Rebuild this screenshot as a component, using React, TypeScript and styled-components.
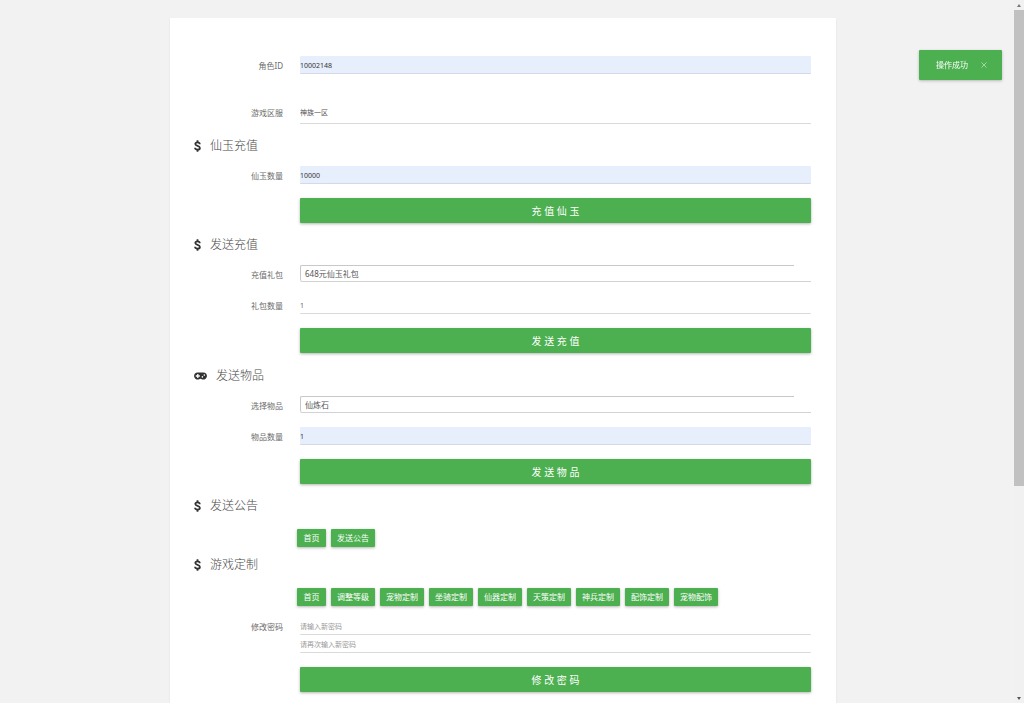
import React from "react";
import styled, { createGlobalStyle } from "styled-components";

const GlobalStyle = createGlobalStyle`
  * { box-sizing: border-box; }
  body {
    margin: 0;
    background: #f2f2f2;
    color: #5e5e5e;
    font-family: "Noto Sans", "Noto Sans CJK SC", sans-serif;
    font-size: 8px;
    line-height: 12px;
  }
  button, input, select { font: inherit; margin: 0; }
`;

const Page = styled.div`
  display: grid;
  grid-template-columns: minmax(0, 1fr) 10px;
  height: 100vh;
  overflow: hidden;
`;

const Content = styled.main`
  padding: 18px 8px 0 0;
  overflow: hidden;
`;

const Card = styled.form`
  width: 100%;
  max-width: 666px;
  min-height: 100vh;
  margin: 0 auto;
  padding: 38px 25px 24px 24px;
  background: #fff;
  box-shadow: 0 1px 2px rgba(0, 0, 0, 0.08);
`;

const Row = styled.div<{ $top?: number; $gap?: number }>`
  display: grid;
  grid-template-columns: 89px minmax(0, 1fr);
  column-gap: ${(p) => p.$gap ?? 17}px;
  margin-top: ${(p) => p.$top ?? 0}px;
`;

const Label = styled.label`
  padding-top: 4px;
  color: #6b6b6b;
  text-align: right;
`;

const Field = styled.div`
  grid-column: 2;
  display: flex;
  flex-direction: column;
`;

const TextInput = styled.input<{ $filled?: boolean }>`
  width: 100%;
  height: 18px;
  padding: 1px 0 0;
  border: 0;
  border-bottom: 1px solid ${(p) => (p.$filled ? "#d3d9e6" : "#dadada")};
  border-radius: 1px;
  outline: 0;
  background: ${(p) => (p.$filled ? "#e8effc" : "transparent")};
  color: ${(p) => (p.$filled ? "#333" : "#666")};
  font-size: 7px;
  &::placeholder { color: #999; opacity: 1; }
`;

const LineSelect = styled.select`
  appearance: none;
  width: 100%;
  height: 21px;
  padding: 0;
  border: 0;
  border-bottom: 1px solid #dadada;
  border-radius: 0;
  background: transparent;
  color: #555;
  font-size: 7px;
`;

const SelectFrame = styled.div`
  height: 17px;
  padding-right: 17px;
  border-bottom: 1px solid #d2d2d2;
  border-bottom-left-radius: 2px;
`;

const BoxSelect = styled.select`
  appearance: none;
  display: block;
  width: 100%;
  height: 16px;
  padding: 0 4px;
  border: solid #c8c8c8;
  border-width: 1px 0 0 1px;
  border-radius: 2px 0 0 2px;
  background: transparent;
  color: #555;
`;

const Heading = styled.h2<{ $top?: number; $bottom?: number }>`
  display: flex;
  align-items: center;
  gap: 9px;
  height: 18px;
  margin: ${(p) => p.$top ?? 13}px 0 ${(p) => p.$bottom ?? 11}px;
  color: #484848;
  font-size: 12px;
  font-weight: 300;
  line-height: 18px;
`;

const Button = styled.button`
  border: 0;
  border-radius: 1px;
  background: #4caf50;
  color: #fff;
  box-shadow: 0 1px 3px rgba(0, 0, 0, 0.3);
  cursor: pointer;
`;

const SubmitButton = styled(Button)`
  height: 25px;
  padding: 0;
  font-size: 10px;
`;

const Links = styled.div`
  display: flex;
  flex-wrap: wrap;
  gap: 5px;
`;

const SmallButton = styled(Button)`
  min-width: 29px;
  height: 18px;
  padding: 0 6px;
`;

const Toast = styled.div`
  position: fixed;
  top: 50px;
  right: 22px;
  display: flex;
  align-items: center;
  gap: 13px;
  height: 30px;
  padding: 0 15px 0 17px;
  border-radius: 1px;
  background: #4caf50;
  color: #fff;
  box-shadow: 0 1px 3px rgba(0, 0, 0, 0.25);
`;

const CloseButton = styled.button`
  display: flex;
  padding: 0;
  border: 0;
  background: none;
  color: #a5d6a7;
`;

const ScrollTrack = styled.div`
  display: grid;
  grid-template-rows: 10px minmax(0, 476fr) minmax(0, 207fr) 10px;
  justify-items: center;
  align-items: center;
  background: #f1f1f1;
`;

const ScrollThumb = styled.div`
  width: 100%;
  height: 100%;
  grid-row: 2;
  background: #c1c1c1;
`;

const ScrollArrow = styled.svg<{ $row: number }>`
  grid-row: ${(p) => p.$row};
`;

const MoneyIcon = () => (
  <svg width="7" height="12" viewBox="0 0 7 12" fill="none" stroke="#333" aria-hidden="true">
    <path d="M5.800 4.200C5.700 3 4.900 2.400 3.600 2.400S1.300 3 1.300 4.100c0 2.300 4.600 1.400 4.600 3.800 0 1.100-.9 1.700-2.300 1.700S1.100 9 1 7.800" strokeWidth="1.800" />
    <path d="M3.500 .3v2M3.500 9.600v2.100" strokeWidth="1.800" />
  </svg>
);

const GamepadIcon = () => (
  <svg width="13" height="8" viewBox="0 0 13 8" aria-hidden="true">
    <path fill="#333" d="M3.700 .4h5.600a3.600 3.600 0 1 1-2 6.600q-.8-.6-1.600 0A3.600 3.600 0 1 1 3.700 .4z" />
    <path fill="none" stroke="#fff" strokeWidth="1.300" d="M1.800 4h4M3.800 2v4" />
    <circle cx="8.400" cy="4.900" r=".8" fill="#fff" />
    <circle cx="10.300" cy="3.100" r=".8" fill="#fff" />
  </svg>
);

const customLinks = ["首页", "调整等级", "宠物定制", "坐骑定制", "仙器定制", "天策定制", "神兵定制", "配饰定制", "宠物配饰"];

function InputRow({ id, label, value, filled, top }: { id: string; label: string; value: string; filled?: boolean; top?: number }) {
  return (
    <Row $top={top}>
      <Label htmlFor={id}>{label}</Label>
      <Field><TextInput id={id} defaultValue={value} $filled={filled} /></Field>
    </Row>
  );
}

function SelectRow({ id, label, value }: { id: string; label: string; value: string }) {
  return (
    <Row>
      <Label htmlFor={id}>{label}</Label>
      <SelectFrame>
        <BoxSelect id={id}><option>{value}</option></BoxSelect>
      </SelectFrame>
    </Row>
  );
}

function SubmitRow({ children }: { children: React.ReactNode }) {
  return (
    <Row $top={14}>
      <Field><SubmitButton type="button">{children}</SubmitButton></Field>
    </Row>
  );
}

function LinkRow({ items }: { items: string[] }) {
  return (
    <Row $gap={14}>
      <Field>
        <Links>
          {items.map((t) => <SmallButton type="button" key={t}>{t}</SmallButton>)}
        </Links>
      </Field>
    </Row>
  );
}

export default function App() {
  return (
    <>
      <GlobalStyle />
      <Page>
        <Content>
          <Card>
            <InputRow id="role" label="角色ID" value="10002148" filled />
            <Row $top={29}>
              <Label htmlFor="server">游戏区服</Label>
              <Field>
                <LineSelect id="server"><option>神族一区</option></LineSelect>
              </Field>
            </Row>

            <Heading><MoneyIcon />仙玉充值</Heading>
            <InputRow id="jade" label="仙玉数量" value="10000" filled />
            <SubmitRow>充 值 仙 玉</SubmitRow>

            <Heading><MoneyIcon />发送充值</Heading>
            <SelectRow id="pack" label="充值礼包" value="648元仙玉礼包" />
            <InputRow id="packCount" label="礼包数量" value="1" top={14} />
            <SubmitRow>发 送 充 值</SubmitRow>

            <Heading $top={14}><GamepadIcon />发送物品</Heading>
            <SelectRow id="item" label="选择物品" value="仙炼石" />
            <InputRow id="itemCount" label="物品数量" value="1" filled top={14} />
            <SubmitRow>发 送 物 品</SubmitRow>

            <Heading $bottom={14}><MoneyIcon />发送公告</Heading>
            <LinkRow items={["首页", "发送公告"]} />

            <Heading $top={9} $bottom={14}><MoneyIcon />游戏定制</Heading>
            <LinkRow items={customLinks} />

            <Row $top={11}>
              <Label htmlFor="password">修改密码</Label>
              <Field>
                <TextInput id="password" placeholder="请输入新密码" />
                <TextInput aria-label="再次输入新密码" placeholder="请再次输入新密码" />
              </Field>
            </Row>
            <SubmitRow>修 改 密 码</SubmitRow>
          </Card>
        </Content>
        <ScrollTrack aria-hidden="true">
          <ScrollArrow $row={1} width="4" height="3" viewBox="0 0 4 3"><path d="M0 3l2-3 2 3z" fill="#777" /></ScrollArrow>
          <ScrollThumb />
          <ScrollArrow $row={4} width="4" height="3" viewBox="0 0 4 3"><path d="M0 0l2 3 2-3z" fill="#555" /></ScrollArrow>
        </ScrollTrack>
      </Page>
      <Toast role="status">
        操作成功
        <CloseButton type="button" aria-label="关闭">
          <svg width="6" height="6" viewBox="0 0 6 6" stroke="currentColor"><path d="M.5.5l5 5M5.500.5l-5 5" /></svg>
        </CloseButton>
      </Toast>
    </>
  );
}
